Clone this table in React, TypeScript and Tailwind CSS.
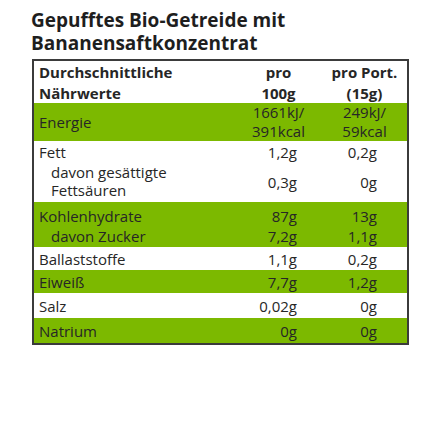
import React from "react";

type Row = {
  label: React.ReactNode;
  per100: React.ReactNode;
  perPort: React.ReactNode;
  green?: boolean;
  indent?: boolean;
  rowClass: string;
};

const rows: Row[] = [
  {
    label: "Fett",
    per100: "1,2g",
    perPort: "0,2g",
    rowClass: "h-[21px] pt-[1px]",
  },
  {
    label: (
      <>
        davon gesättigte
        <br />
        Fettsäuren
      </>
    ),
    per100: "0,3g",
    perPort: "0g",
    indent: true,
    rowClass: "h-[40px]",
  },
  {
    label: "Kohlenhydrate",
    per100: "87g",
    perPort: "13g",
    green: true,
    rowClass: "h-[24px] pt-[4px]",
  },
  {
    label: "davon Zucker",
    per100: "7,2g",
    perPort: "1,1g",
    green: true,
    indent: true,
    rowClass: "h-[21px]",
  },
  {
    label: "Ballaststoffe",
    per100: "1,1g",
    perPort: "0,2g",
    rowClass: "h-[23px] items-center",
  },
  {
    label: "Eiweiß",
    per100: "7,7g",
    perPort: "1,2g",
    green: true,
    rowClass: "h-[23px] items-center",
  },
  {
    label: "Salz",
    per100: "0,02g",
    perPort: "0g",
    rowClass: "h-[25px] items-center",
  },
  {
    label: "Natrium",
    per100: "0g",
    perPort: "0g",
    green: true,
    rowClass: "h-[25px] items-center",
  },
];

export default function App() {
  return (
    <div
      className="w-[440px] h-[440px] bg-white text-[#262626]"
      style={{ fontFamily: "'Open Sans', 'Noto Sans', sans-serif" }}
    >
      <h1 className="pl-[31px] pt-[9px] text-[19px] leading-[23px] font-bold text-[#1e1e1e]">
        Gepufftes Bio-Getreide mit
        <br />
        Bananensaftkonzentrat
      </h1>

      <div className="ml-[32px] mt-[4px] w-[377px] border-2 border-[#3b3b3b] text-[15px]">
        {/* header */}
        <div className="flex h-[42px] pt-[1px] leading-[21px] font-bold">
          <div className="w-[211px] pl-[5px]">
            Durchschnittliche
            <br />
            Nährwerte
          </div>
          <div className="w-[67px] text-center">
            pro
            <br />
            100g
          </div>
          <div className="flex-1 pl-[10px] text-center">
            pro Port.
            <br />
            (15g)
          </div>
        </div>

        {/* energie */}
        <div className="flex h-[38px] items-center bg-[#7cb900] leading-[19px]">
          <div className="w-[211px] pl-[5px]">Energie</div>
          <div className="w-[67px] text-center">
            1661kJ/
            <br />
            391kcal
          </div>
          <div className="flex-1 pl-[10px] text-center">
            249kJ/
            <br />
            59kcal
          </div>
        </div>

        {rows.map((r, i) => (
          <div
            key={i}
            className={`flex leading-[20px] ${r.rowClass} ${
              r.green ? "bg-[#7cb900]" : "bg-white"
            }`}
          >
            <div
              className={`w-[211px] ${
                r.indent ? "pl-[17px]" : "pl-[5px]"
              } ${i === 1 ? "self-start pt-[1px] leading-[18px]" : ""}`}
            >
              {r.label}
            </div>
            <div
              className={`w-[67px] pr-[15px] text-right ${
                i === 1 ? "self-center" : ""
              }`}
            >
              {r.per100}
            </div>
            <div
              className={`flex-1 pr-[30px] text-right ${
                i === 1 ? "self-center" : ""
              }`}
            >
              {r.perPort}
            </div>
          </div>
        ))}
      </div>
    </div>
  );
}
